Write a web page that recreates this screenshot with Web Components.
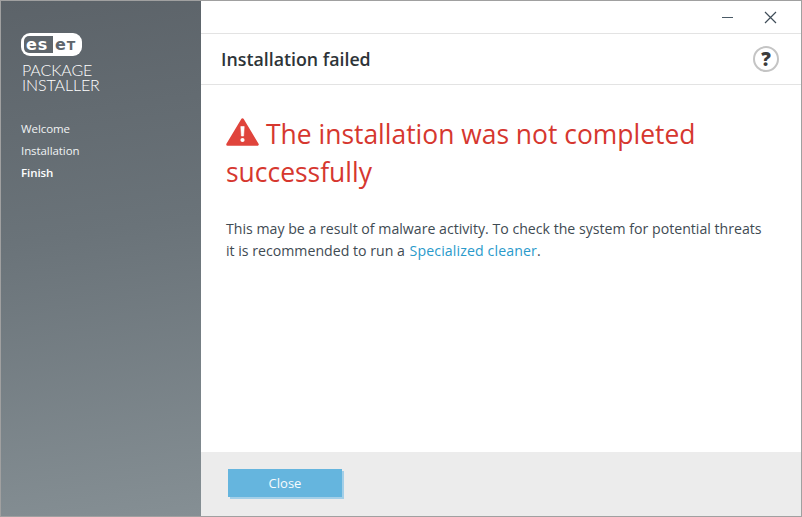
<!DOCTYPE html>
<html>
<head>
<meta charset="utf-8">
<title>ESET Package Installer</title>
<style>
html,body{margin:0;height:100%;background:#fff}
body{font-family:"Open Sans","Noto Sans",sans-serif}
</style>
</head>
<body>
<installer-window>
    <side-bar slot="side">
        <step-item>Welcome</step-item>
        <step-item>Installation</step-item>
        <step-item current>Finish</step-item>
    </side-bar>
    <title-bar slot="title"></title-bar>
    <page-header slot="header">Installation failed</page-header>
    <error-message slot="content">This may be a result of malware activity. To check the system for potential threats it is recommended to run a <a href="#" style="color:#2a9acb;text-decoration:none;letter-spacing:.12px;margin-left:1px">Specialized cleaner</a>.</error-message>
    <page-footer slot="footer"></page-footer>
</installer-window>

<script>
class InstallerWindow extends HTMLElement{
    constructor(){
        super()
        this.attachShadow({mode:'open'})
        this.shadowRoot.innerHTML = `
        <style>
            :host{
                display:grid;
                grid-template-columns:200px 1fr;
                box-sizing:border-box;
                width:802px;
                height:517px;
                border:1px solid #a0a0a0;
                background:#fff;
            }
            .main{
                display:flex;
                flex-direction:column;
                min-width:0;
            }
            .grow{flex:1}
        </style>
        <slot name="side"></slot>
        <div class="main">
            <slot name="title"></slot>
            <slot name="header"></slot>
            <div class="grow"><slot name="content"></slot></div>
            <slot name="footer"></slot>
        </div>
        `
    }
}

class SideBar extends HTMLElement{
    constructor(){
        super()
        this.attachShadow({mode:'open'})
        this.shadowRoot.innerHTML = `
        <style>
            :host{
                display:block;
                padding:32px 0 0 20px;
                background:linear-gradient(172deg,#5c6369 0%,#6a7379 45%,#858f94 100%);
                color:#fff;
            }
            .logo{
                display:flex;
                box-sizing:border-box;
                width:61px;
                height:23px;
                padding:3px 0 3px 3px;
                border-radius:9px;
                background:#fff;
                font:bold 16px/17px "DejaVu Sans",sans-serif;
            }
            .logo span{
                display:block;
                height:17px;
                overflow:hidden;
                white-space:nowrap;
            }
            .logo .a{
                width:29px;
                padding-left:2px;
                box-sizing:border-box;
                background:#5f666c;
                border-radius:5px 0 0 5px;
                color:#fff;
                letter-spacing:1px;
            }
            .logo .b{
                flex:1;
                padding-left:2px;
                color:#5f666c;
            }
            .logo small{font-size:12.5px;margin-left:1px}
            .name{
                margin:7px 0 0 1px;
                font:300 16px/14.5px "Lato","Open Sans",sans-serif;
                color:#fff;
                letter-spacing:-.1px;
            }
            .steps{
                display:flex;
                flex-direction:column;
                margin-top:26px;
            }
        </style>
        <div class="logo"><span class="a">es</span><span class="b">e<small>T</small></span></div>
        <div class="name">PACKAGE<br>INSTALLER</div>
        <div class="steps"><slot></slot></div>
        `
    }
}

class StepItem extends HTMLElement{
    constructor(){
        super()
        this.attachShadow({mode:'open'})
        this.shadowRoot.innerHTML = `
        <style>
            :host{
                display:block;
                height:22px;
                font-size:11.5px;
                line-height:22px;
                letter-spacing:-.08px;
                color:#f0f3f4;
            }
            :host([current]){
                font-weight:600;
                color:#fff;
            }
        </style>
        <slot></slot>
        `
    }
}

class TitleBar extends HTMLElement{
    constructor(){
        super()
        this.attachShadow({mode:'open'})
        this.shadowRoot.innerHTML = `
        <style>
            :host{
                display:flex;
                justify-content:flex-end;
                align-items:center;
                gap:30px;
                box-sizing:border-box;
                height:33px;
                padding:0 24px 0 0;
                border-bottom:1px solid #e3e3e3;
            }
            svg{display:block}
        </style>
        <svg width="12" height="12" viewBox="0 0 12 12"><path d="M0 6.5H11" stroke="#4a5a66" stroke-width="1" fill="none"/></svg>
        <svg width="13" height="13" viewBox="0 0 13 13"><path d="M1 1L12 12M12 1L1 12" stroke="#3f4d58" stroke-width="1.2" fill="none"/></svg>
        `
    }
}

class PageHeader extends HTMLElement{
    constructor(){
        super()
        this.attachShadow({mode:'open'})
        this.shadowRoot.innerHTML = `
        <style>
            :host{
                display:flex;
                align-items:center;
                justify-content:space-between;
                box-sizing:border-box;
                height:51px;
                padding:0 22px 0 20px;
                border-bottom:1px solid #e3e3e3;
                font-size:17.8px;
                font-weight:600;
                color:#2e3438;
            }
            .help{
                display:flex;
                align-items:center;
                justify-content:center;
                box-sizing:border-box;
                width:26px;
                height:26px;
                border:2px solid #c4c4c4;
                border-radius:50%;
                font-size:19px;
                font-weight:800;
                color:#3c3c3c;
            }
        </style>
        <span><slot></slot></span>
        <span class="help">?</span>
        `
    }
}

class ErrorMessage extends HTMLElement{
    constructor(){
        super()
        this.attachShadow({mode:'open'})
        this.shadowRoot.innerHTML = `
        <style>
            :host{
                display:block;
                padding:30px 30px 0 25px;
            }
            h1{
                margin:0;
                font-size:26.45px;
                font-weight:400;
                line-height:38px;
                color:#d6372f;
            }
            svg{
                vertical-align:-2px;
                margin-right:7px;
            }
            p{
                margin:27px 0 0;
                font-size:14.15px;
                line-height:22px;
                color:#3f4b53;
            }
        </style>
        <h1>
            <svg width="33" height="28" viewBox="0 0 33 28">
                <path d="M16.5 1.5L31.5 26.5H1.5Z" fill="#e0443c" stroke="#e0443c" stroke-width="2.5" stroke-linejoin="round"/>
                <path d="M14.8 8.5H18.2L17.6 18H15.4Z" fill="#fff" stroke="#fff" stroke-width=".6" stroke-linejoin="round"/>
                <circle cx="16.5" cy="22" r="2.1" fill="#fff"/>
            </svg>The installation was not completed successfully
        </h1>
        <p><slot></slot></p>
        `
    }
}

class PageFooter extends HTMLElement{
    constructor(){
        super()
        this.attachShadow({mode:'open'})
        this.shadowRoot.innerHTML = `
        <style>
            :host{
                display:block;
                box-sizing:border-box;
                height:64px;
                padding:17px 0 0 27px;
                background:#ececec;
            }
            button{
                display:block;
                width:114px;
                height:28px;
                padding:0;
                border:0;
                background:#65b5de;
                box-shadow:2px 2px 0 #a3cfe8;
                color:#f7fbfd;
                font:13px "Open Sans","Noto Sans",sans-serif;
            }
        </style>
        <button>Close</button>
        `
    }
}

customElements.define('installer-window',InstallerWindow)
customElements.define('side-bar',SideBar)
customElements.define('step-item',StepItem)
customElements.define('title-bar',TitleBar)
customElements.define('page-header',PageHeader)
customElements.define('error-message',ErrorMessage)
customElements.define('page-footer',PageFooter)
</script>
</body>
</html>
